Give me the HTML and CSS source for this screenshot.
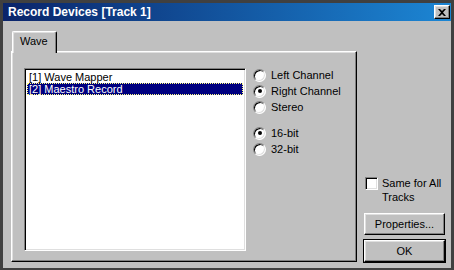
FILE: index.html
```html
<!DOCTYPE html>
<html lang="en">
<head>
  <meta charset="UTF-8" />
  <title>Record Devices [Track 1]</title>
  <link rel="stylesheet" href="styles.css">
</head>
<body>
  <div class="window">
    <div class="titlebar">
      <span class="title">Record Devices [Track 1]</span>
      <button class="close">
        <svg width="8" height="7" viewBox="0 0 8 7">
          <path d="M0 0h2l2 2 2-2h2L5 3.5 8 7H6L4 5 2 7H0l3-3.5z" fill="#000"/>
        </svg>
      </button>
    </div>

    <div class="content">
      <div class="tabs">
        <div class="tabstrip">
          <div class="tab">Wave</div>
        </div>
        <div class="panel">
          <div class="listbox">
            <div class="item">[1] Wave Mapper</div>
            <div class="item selected">[2] Maestro Record</div>
          </div>
          <div class="options">
            <div class="group">
              <label class="radio"><span class="dot"></span>Left Channel</label>
              <label class="radio"><span class="dot checked"></span>Right Channel</label>
              <label class="radio"><span class="dot"></span>Stereo</label>
            </div>
            <div class="group">
              <label class="radio"><span class="dot checked"></span>16-bit</label>
              <label class="radio"><span class="dot"></span>32-bit</label>
            </div>
          </div>
        </div>
      </div>

      <div class="side">
        <label class="check"><span class="box"></span><span class="check-label">Same for All Tracks</span></label>
        <button class="btn">Properties...</button>
        <button class="btn default">OK</button>
      </div>
    </div>
  </div>
</body>
</html>
```

FILE: styles.css
```css
* {
  box-sizing: border-box;
}

body {
  margin: 0;
  font-family: "Liberation Sans", Arial, sans-serif;
  font-size: 11px;
  color: #000;
}

.window {
  width: 454px;
  height: 270px;
  background: #c0c0c0;
  border: 3px solid #404040;
  border-bottom-width: 2px;
  display: flex;
  flex-direction: column;
}

.titlebar {
  flex: none;
  height: 18px;
  background: linear-gradient(to right, #0a246a, #1c86d4);
  display: flex;
  align-items: center;
  justify-content: space-between;
  padding: 0 1px 0 5px;
}

.title {
  color: #fff;
  font-weight: bold;
  font-size: 12px;
}

.close {
  width: 16px;
  height: 14px;
  padding: 0;
  background: #c0c0c0;
  border: 1px solid;
  border-color: #fff #000 #000 #fff;
  box-shadow: inset -1px -1px #808080, inset 1px 1px #dfdfdf;
  display: flex;
  align-items: center;
  justify-content: center;
}

.content {
  flex: 1;
  display: flex;
  gap: 7px;
  padding: 10px 6px 6px 8px;
}

.tabs {
  width: 346px;
  display: flex;
  flex-direction: column;
}

.tabstrip {
  height: 20px;
  padding-left: 1px;
  display: flex;
}

.tab {
  position: relative;
  z-index: 1;
  width: 45px;
  height: 22px;
  padding: 3px 0 0 7px;
  background: #c0c0c0;
  border-top: 1px solid #fff;
  border-left: 1px solid #fff;
  border-right: 1px solid #000;
  border-radius: 2px 2px 0 0;
  box-shadow: inset -1px 0 #808080, inset 1px 1px #dfdfdf;
}

.panel {
  flex: 1;
  display: flex;
  padding: 16px 0 10px 12px;
  border: 1px solid;
  border-color: #fff #000 #000 #fff;
  box-shadow: inset -1px -1px #808080, inset 1px 1px #dfdfdf;
}

.listbox {
  width: 222px;
  background: #fff;
  border: 1px solid;
  border-color: #808080 #fff #fff #808080;
  box-shadow: inset 1px 1px #000, inset -1px -1px #dfdfdf;
  padding: 2px 2px;
}

.item {
  height: 12px;
  line-height: 12px;
  padding-left: 2px;
  white-space: nowrap;
}

.item.selected {
  background: #000080;
  color: #fff;
  outline: 1px dotted #ffff80;
  outline-offset: -1px;
}

.options {
  margin: -1px 0 0 7px;
  display: flex;
  flex-direction: column;
  gap: 10px;
}

.radio {
  height: 16px;
  display: flex;
  align-items: center;
  gap: 5px;
}

.dot {
  width: 13px;
  height: 13px;
  border-radius: 50%;
  border: 1px solid;
  border-color: #808080 #fff #fff #808080;
  box-shadow: inset 1px 1px #000, inset -1px -1px #dfdfdf;
  background: #fff;
  display: flex;
  align-items: center;
  justify-content: center;
}

.dot.checked::after {
  content: "";
  width: 4px;
  height: 4px;
  border-radius: 50%;
  background: #000;
}

.side {
  width: 81px;
  display: flex;
  flex-direction: column;
  justify-content: flex-end;
  gap: 5px;
}

.check {
  display: flex;
  align-items: flex-start;
  gap: 4px;
  padding-left: 1px;
  margin-bottom: 4px;
  line-height: 14px;
}

.box {
  flex: none;
  width: 13px;
  height: 13px;
  margin-top: 1px;
  background: #fff;
  border: 1px solid;
  border-color: #808080 #fff #fff #808080;
  box-shadow: inset 1px 1px #000, inset -1px -1px #dfdfdf;
}

.check-label {
  width: 62px;
}

.btn {
  height: 22px;
  padding: 0;
  font: inherit;
  color: #000;
  background: #c0c0c0;
  border: 1px solid;
  border-color: #fff #000 #000 #fff;
  box-shadow: inset -1px -1px #808080, inset 1px 1px #dfdfdf;
}

.btn.default {
  box-shadow: inset -1px -1px #808080, inset 1px 1px #dfdfdf, 0 0 0 1px #000;
}
```
